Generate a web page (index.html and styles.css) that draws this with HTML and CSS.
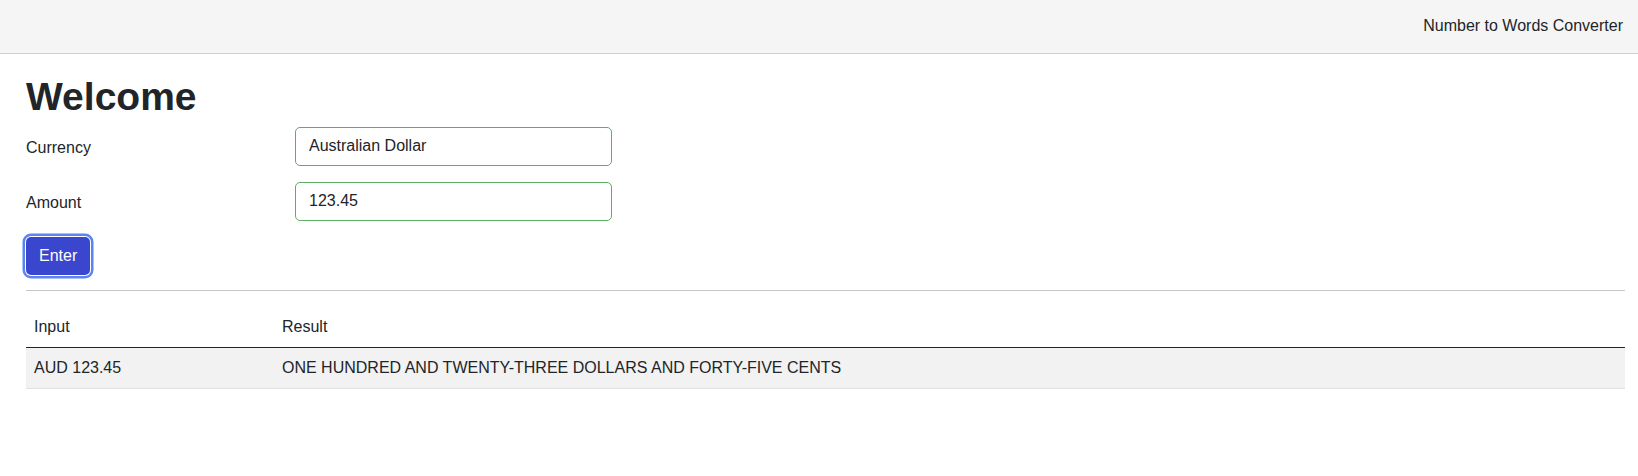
FILE: index.html
```html
<!DOCTYPE html>
<html lang="en">
<head>
<meta charset="utf-8">
<title>Number to Words Converter</title>
<link rel="stylesheet" href="styles.css">
</head>
<body>
<header class="topbar">
  <span class="brand">Number to Words Converter</span>
</header>
<main class="content">
  <h1 class="title">Welcome</h1>
  <form class="form">
    <div class="field">
      <label class="label" for="currency">Currency</label>
      <input class="control" id="currency" type="text" value="Australian Dollar">
    </div>
    <div class="field">
      <label class="label" for="amount">Amount</label>
      <input class="control" id="amount" type="text" value="123.45">
    </div>
    <button type="button" class="btn">Enter</button>
  </form>
  <hr class="divider">
  <table class="results">
    <thead>
      <tr><th class="col-input">Input</th><th>Result</th></tr>
    </thead>
    <tbody>
      <tr><td>AUD 123.45</td><td>ONE HUNDRED AND TWENTY-THREE DOLLARS AND FORTY-FIVE CENTS</td></tr>
    </tbody>
  </table>
</main>
</body>
</html>
```
FILE: styles.css
```css
* { box-sizing: border-box; }
html, body {
  margin: 0;
  padding: 0;
  background: #fff;
  color: #212529;
  font-family: "Liberation Sans", Arial, Helvetica, sans-serif;
  font-size: 16px;
  line-height: 1.5;
}
.topbar {
  height: 54px;
  background: #f5f5f5;
  border-bottom: 1px solid #d2d2d2;
  display: flex;
  align-items: center;
  justify-content: flex-end;
  padding: 0 15px 2px 0;
}
.brand {
  font-size: 16px;
  color: #212529;
}
.content {
  padding: 19px 13px 0 26px;
}
.title {
  margin: 0 0 6px 0;
  font-size: 39px;
  font-weight: 700;
  line-height: 1.23;
}
.form {
  display: flex;
  flex-direction: column;
  align-items: flex-start;
}
.field {
  display: grid;
  grid-template-columns: 269px 317px;
  align-items: center;
  margin-bottom: 16px;
}
.label {
  font-size: 16px;
  padding-top: 3px;
}
.control {
  height: 39px;
  width: 317px;
  border: 1px solid #5cae62;
  border-radius: 5px;
  padding: 6px 13px;
  font: inherit;
  font-size: 16px;
  color: #212529;
  background: #fff;
  outline: none;
}
.btn {
  margin: 0;
  height: 38px;
  padding: 0 13px;
  background: #3b46cf;
  color: #fff;
  border: none;
  border-radius: 5px;
  font: inherit;
  font-size: 16px;
  box-shadow: 0 0 0 1px #fff, 0 0 0 3.5px #5a84f2;
}
.divider {
  margin: 15px 0 16px 0;
  border: 0;
  border-top: 1px solid #c8c8c8;
  height: 0;
}
.results {
  width: 100%;
  border-collapse: collapse;
}
.results th, .results td {
  text-align: left;
  font-weight: 400;
  padding: 8px;
  font-size: 16px;
}
.results .col-input { width: 248px; }
.results thead th {
  border-bottom: 1px solid #212529;
}
.results tbody td {
  background: #f2f2f2;
  border-bottom: 1px solid #dee2e6;
}
```
